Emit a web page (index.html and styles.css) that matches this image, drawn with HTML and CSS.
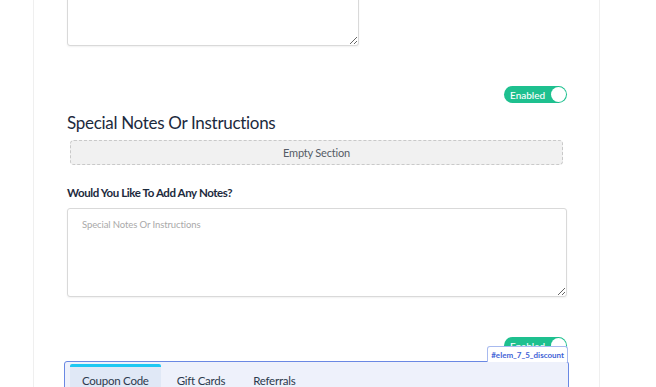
FILE: index.html
```html
<!DOCTYPE html>
<html lang="en">
<head>
    <meta charset="UTF-8">
    <meta name="viewport" content="width=device-width, initial-scale=1.0">
    <title>Checkout Builder</title>
    <link rel="stylesheet" href="styles.css">
</head>
<body>

    <div class="page-card">
        <textarea class="field-area short"></textarea>

        <div class="toggle-row first">
            <div class="toggle"><span>Enabled</span><i class="knob"></i></div>
        </div>

        <h2 class="section-title">Special Notes Or Instructions</h2>
        <div class="empty-section">Empty Section</div>

        <label class="field-label">Would You Like To Add Any Notes?</label>
        <textarea class="field-area wide" placeholder="Special Notes Or Instructions"></textarea>

        <div class="toggle-row second">
            <div class="toggle"><span>Enabled</span><i class="knob"></i></div>
        </div>

        <div class="discount-box">
            <div class="elem-tag">#elem_7_5_discount</div>
            <div class="tabs">
                <div class="tab active">Coupon Code</div>
                <div class="tab">Gift Cards</div>
                <div class="tab">Referrals</div>
            </div>
        </div>
    </div>

</body>
</html>
```

FILE: styles.css
```css
body {
    margin: 0;
    background: #fff;
    font-family: Lato, "Open Sans", sans-serif;
    color: #1e2b3c;
    overflow: hidden;
    height: 387px;
}
.page-card {
    margin-left: 33px;
    width: 500px;
    height: 500px;
    padding: 0 32px 0 33px;
    border-left: 1px solid #efefef;
    border-right: 1px solid #efefef;
}
.field-area {
    display: block;
    box-sizing: border-box;
    border: 1px solid #d9d9d9;
    border-radius: 3px;
    box-shadow: 0 1px 2px rgba(0, 0, 0, 0.06);
    font-family: Lato, sans-serif;
    font-size: 9.5px;
    letter-spacing: -0.1px;
    padding: 10px 14px;
    margin: 0;
    resize: both;
    outline: none;
}
.field-area::placeholder {
    color: #a9a9a9;
}
.field-area.short {
    width: 292px;
    height: 100px;
    margin-top: -54px;
}
.field-area.wide {
    width: 500px;
    height: 89px;
}
.toggle-row {
    display: flex;
    justify-content: flex-end;
}
.toggle-row.first {
    margin-top: 40px;
}
.toggle-row.second {
    margin-top: 40px;
}
.toggle {
    width: 63px;
    height: 17px;
    box-sizing: border-box;
    background: #1ec08f;
    border-radius: 9px;
    display: flex;
    align-items: center;
    justify-content: space-between;
    padding: 0 1px 0 6px;
    color: #fff;
    font-size: 10px;
    font-weight: 500;
}
.knob {
    width: 15px;
    height: 15px;
    border-radius: 50%;
    background: #fff;
}
.section-title {
    font-size: 17px;
    letter-spacing: -0.3px;
    font-weight: 400;
    margin: 9px 0 0;
    line-height: 22px;
    color: #1c2a3d;
}
.empty-section {
    margin: 6px 3px 0 3px;
    width: 493px;
    height: 25px;
    box-sizing: border-box;
    background: #f1f1f1;
    border: 1px dashed #c9c9c9;
    border-radius: 4px;
    display: flex;
    align-items: center;
    justify-content: center;
    font-size: 11px;
    letter-spacing: -0.2px;
    color: #555c66;
}
.field-label {
    display: block;
    font-size: 11.5px;
    letter-spacing: -0.4px;
    font-weight: 700;
    line-height: 14px;
    margin: 21px 0 8px;
    color: #1c2a3d;
}
.discount-box {
    position: relative;
    margin: 7px 0 0 -3px;
    width: 505px;
    height: 60px;
    box-sizing: border-box;
    border: 1px solid #6a88e3;
    border-radius: 3px;
    background: #eef1fb;
    padding: 2px 5px 0;
}
.elem-tag {
    position: absolute;
    right: 0;
    bottom: 100%;
    background: #fff;
    border: 1px solid #a8baef;
    border-bottom: none;
    border-radius: 3px 3px 0 0;
    padding: 3px 3px 2px;
    font-size: 8px;
    font-weight: 700;
    color: #3f63d6;
}
.tabs {
    display: flex;
    gap: 4px;
}
.tab {
    font-size: 11.5px;
    letter-spacing: -0.25px;
    color: #2c3a4d;
    padding: 7px 12px 0;
    height: 30px;
    white-space: nowrap;
    border-top: 3px solid transparent;
}
.tab.active {
    background: #e0e8f6;
    border-top-color: #1ec8f2;
    border-radius: 2px 2px 0 0;
}
```
